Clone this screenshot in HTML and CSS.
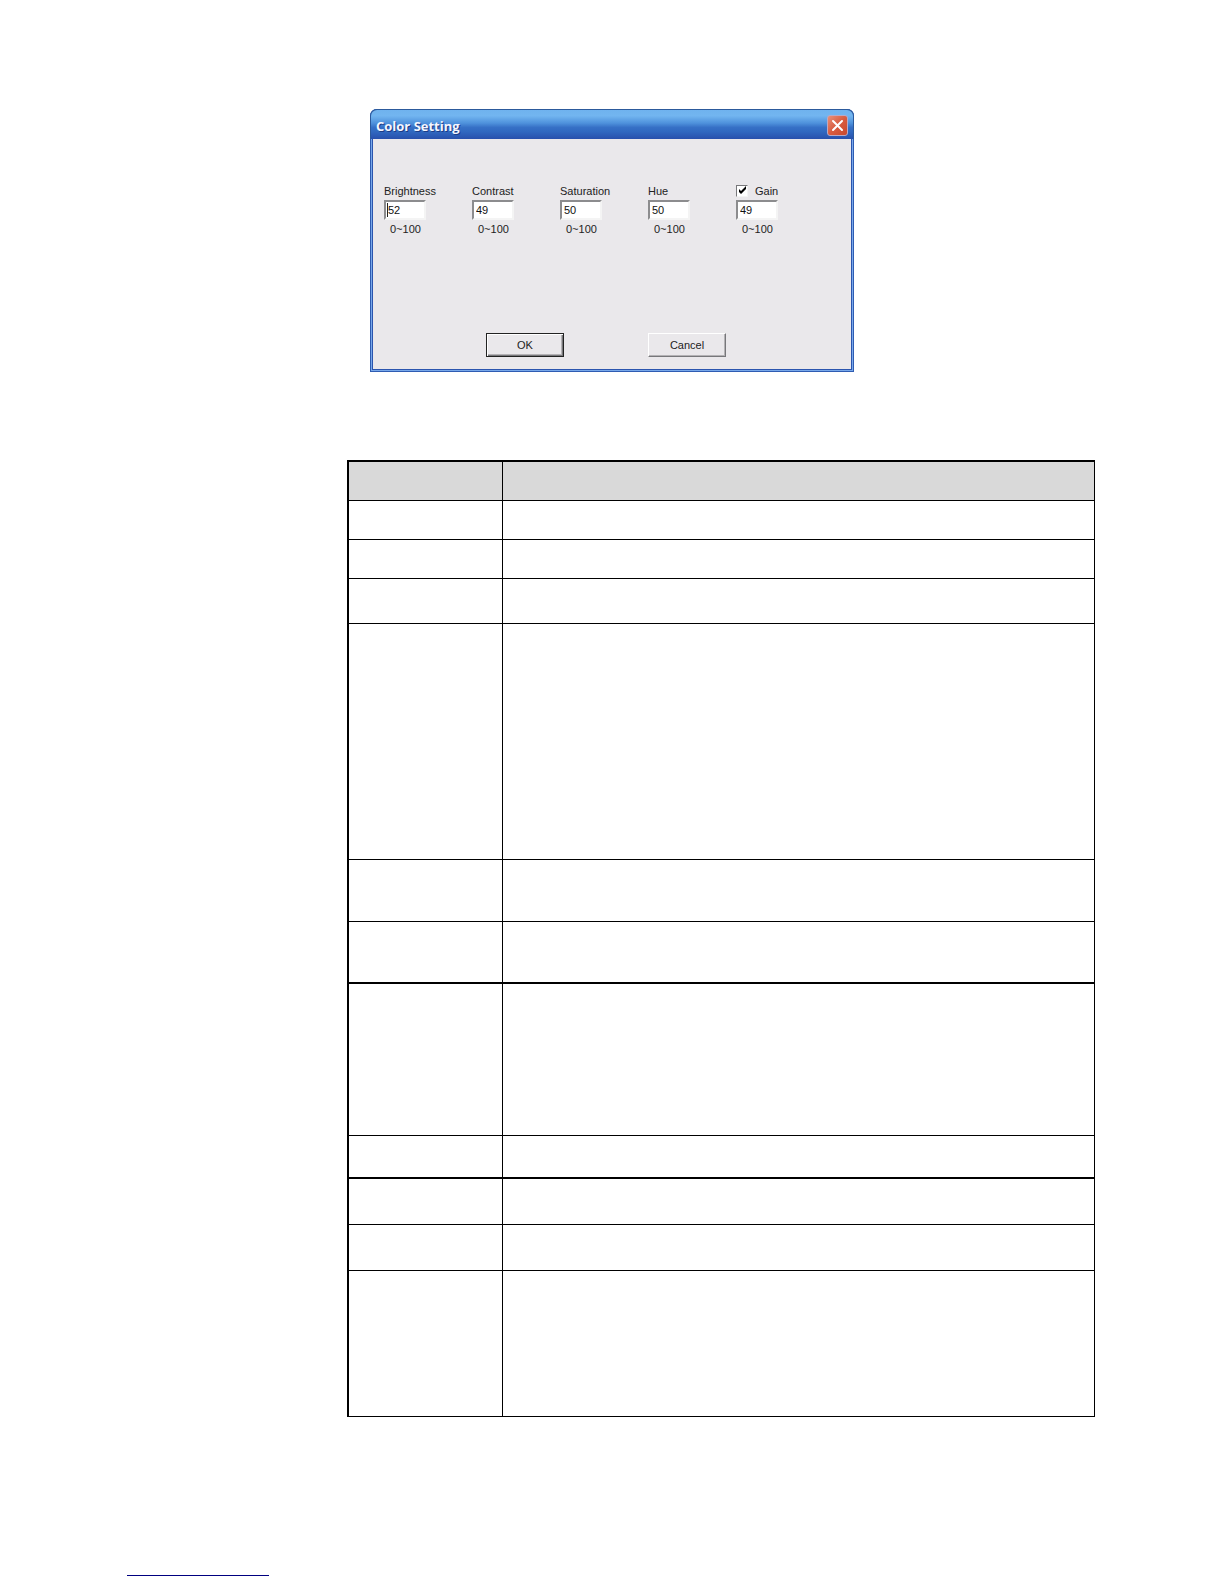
FILE: index.html
```html
<!DOCTYPE html>
<html lang="en">

<head>
    <meta charset="UTF-8">
    <meta name="viewport" content="width=device-width, initial-scale=1">
    <title>Color Setting</title>

    <link rel="stylesheet" href="styles.css">
</head>

<body>
<main class="content">
    <form class="dialog" onsubmit="return false">
        <div class="titlebar">
            <h1 class="title">Color Setting</h1>
            <button type="button" class="close" aria-label="Close">
                <svg width="13" height="13" viewBox="0 0 13 13">
                    <path d="M2 2 L11 11 M11 2 L2 11" stroke="#fff" stroke-width="2" stroke-linecap="round"/>
                </svg>
            </button>
        </div>
        <div class="dialog-body">
            <div class="fields">
                <div class="field">
                    <label for="brightness">Brightness</label>
                    <input class="value caret" type="text" id="brightness" value="52">
                    <span class="range">0~100</span>
                </div>
                <div class="field">
                    <label for="contrast">Contrast</label>
                    <input class="value" type="text" id="contrast" value="49">
                    <span class="range">0~100</span>
                </div>
                <div class="field">
                    <label for="saturation">Saturation</label>
                    <input class="value" type="text" id="saturation" value="50">
                    <span class="range">0~100</span>
                </div>
                <div class="field">
                    <label for="hue">Hue</label>
                    <input class="value" type="text" id="hue" value="50">
                    <span class="range">0~100</span>
                </div>
                <div class="field">
                    <label class="check">
                        <span class="tick">
                            <input type="checkbox" id="gainOn" checked>
                            <svg width="12" height="12" viewBox="0 0 12 12">
                                <path d="M3 4 L5 6 L10 1 V4 L5 9 L3 7 Z" fill="#000"/>
                            </svg>
                        </span>
                        Gain
                    </label>
                    <input class="value" type="text" id="gain" value="49" aria-label="Gain value">
                    <span class="range">0~100</span>
                </div>
            </div>
            <div class="actions">
                <button type="submit" class="btn default">OK</button>
                <button type="button" class="btn">Cancel</button>
            </div>
        </div>
    </form>

    <table class="params">
        <thead>
        <tr class="row-s"><th></th><th></th></tr>
        </thead>
        <tbody>
        <tr class="row-s"><td></td><td></td></tr>
        <tr class="row-s"><td></td><td></td></tr>
        <tr class="row-m"><td></td><td></td></tr>
        <tr class="row-xxl"><td></td><td></td></tr>
        <tr class="row-l"><td></td><td></td></tr>
        <tr class="row-l thick"><td></td><td></td></tr>
        <tr class="row-xl"><td></td><td></td></tr>
        <tr class="row-sm thick"><td></td><td></td></tr>
        <tr class="row-ml"><td></td><td></td></tr>
        <tr class="row-ml"><td></td><td></td></tr>
        <tr class="row-last"><td></td><td></td></tr>
        </tbody>
    </table>
</main>

<footer class="footer">
    <div class="footer-line"></div>
</footer>
</body>

</html>
```
FILE: styles.css
```css
* {
    box-sizing: border-box;
}

body {
    display: flex;
    flex-direction: column;
    min-height: 100vh;
    margin: 0;
    background-color: #fff;
    font-family: "Liberation Sans", Arial, sans-serif;
    font-size: 11px;
    line-height: 16px;
    color: #222;
}

.content {
    padding: 109px 129px 0 347px;
}

/* dialog window */
.dialog {
    max-width: 484px;
    margin: 0 0 88px 23px;
    padding: 0 3px 3px;
    background-color: #2b55ae;
    border-radius: 7px 7px 0 0;
    box-shadow: inset 0 0 0 1px #2f5cb2, inset 0 0 0 2px #78a8ea;
}

.titlebar {
    display: flex;
    align-items: center;
    justify-content: space-between;
    height: 30px;
    margin: 0 -3px;
    padding: 2px 5px 0 5px;
    border: 1px solid #2c5a9c;
    border-bottom: none;
    border-radius: 7px 7px 0 0;
    background: linear-gradient(#6fb2ee 0%, #72b5f0 20%, #4f92dc 45%, #3670c6 60%, #3068c0 75%, #2850ac 100%);
}

.title {
    margin: 0;
    font-family: "Open Sans", "Noto Sans", sans-serif;
    font-size: 13px;
    font-weight: 700;
    color: #f4f6ff;
    text-shadow: 1px 1px #1c3c86;
}

.close {
    display: flex;
    align-items: center;
    justify-content: center;
    width: 21px;
    height: 21px;
    padding: 0;
    border: 1px solid #b9a9c4;
    border-radius: 3px;
    background: linear-gradient(135deg, #e89078, #d85c40 50%, #c8482c);
}

.dialog-body {
    padding: 44px 11px 12px;
    background-color: #eae8eb;
}

.fields {
    display: flex;
}

.field {
    display: flex;
    flex-direction: column;
    flex: 0 0 88px;
}

.value {
    width: 42px;
    height: 20px;
    margin: 1px 0;
    padding: 0 2px;
    border: 2px solid;
    border-color: #8c8c8e #f4f4f4 #f4f4f4 #8c8c8e;
    background-color: #fff;
    font: inherit;
    color: #111;
}

.caret {
    background-image: linear-gradient(#222, #222);
    background-size: 1px 14px;
    background-repeat: no-repeat;
    background-position: 1px 1px;
}

.range {
    padding-left: 6px;
}

.check {
    display: flex;
    align-items: center;
    gap: 7px;
}

.tick {
    display: grid;
}

.tick input,
.tick svg {
    grid-area: 1 / 1;
}

.tick input {
    appearance: none;
    width: 12px;
    height: 12px;
    margin: 0;
    border: 1px solid;
    border-color: #77777a #f4f4f4 #f4f4f4 #77777a;
    background-color: #fff;
}

.tick svg {
    visibility: hidden;
    pointer-events: none;
}

.tick input:checked + svg {
    visibility: visible;
}

.actions {
    display: flex;
    gap: 84px;
    margin-top: 96px;
    padding-left: 102px;
}

.btn {
    width: 78px;
    height: 24px;
    padding: 0;
    border: 1px solid;
    border-color: #fff #77777a #77777a #fff;
    background-color: #eae8eb;
    box-shadow: inset -1px -1px #b4b2b5;
    font: inherit;
    color: #222;
}

.default {
    border-color: #222;
    box-shadow: inset 1px 1px #fff, inset -1px -1px #77777a, inset -2px -2px #b4b2b5;
}

/* parameter table */
.params {
    width: 100%;
    table-layout: fixed;
    border-collapse: separate;
    border-spacing: 0;
    border-top: 2px solid #000;
    border-left: 2px solid #000;
}

.params th,
.params td {
    padding: 0;
    border-right: 1px solid #000;
    border-bottom: 1px solid #000;
}

.params th {
    background-color: #d9d9d9;
}

.params th:first-child {
    width: 154px;
}

.params .thick td {
    border-bottom-width: 2px;
}

.row-s {
    height: 39px;
}

.row-sm {
    height: 43px;
}

.row-m {
    height: 45px;
}

.row-ml {
    height: 46px;
}

.row-l {
    height: 62px;
}

.row-last {
    height: 146px;
}

.row-xl {
    height: 152px;
}

.row-xxl {
    height: 236px;
}

.footer {
    margin-top: auto;
    padding: 0 127px 8px;
}

.footer-line {
    width: 142px;
    border-bottom: 1px solid #000080;
}
```
